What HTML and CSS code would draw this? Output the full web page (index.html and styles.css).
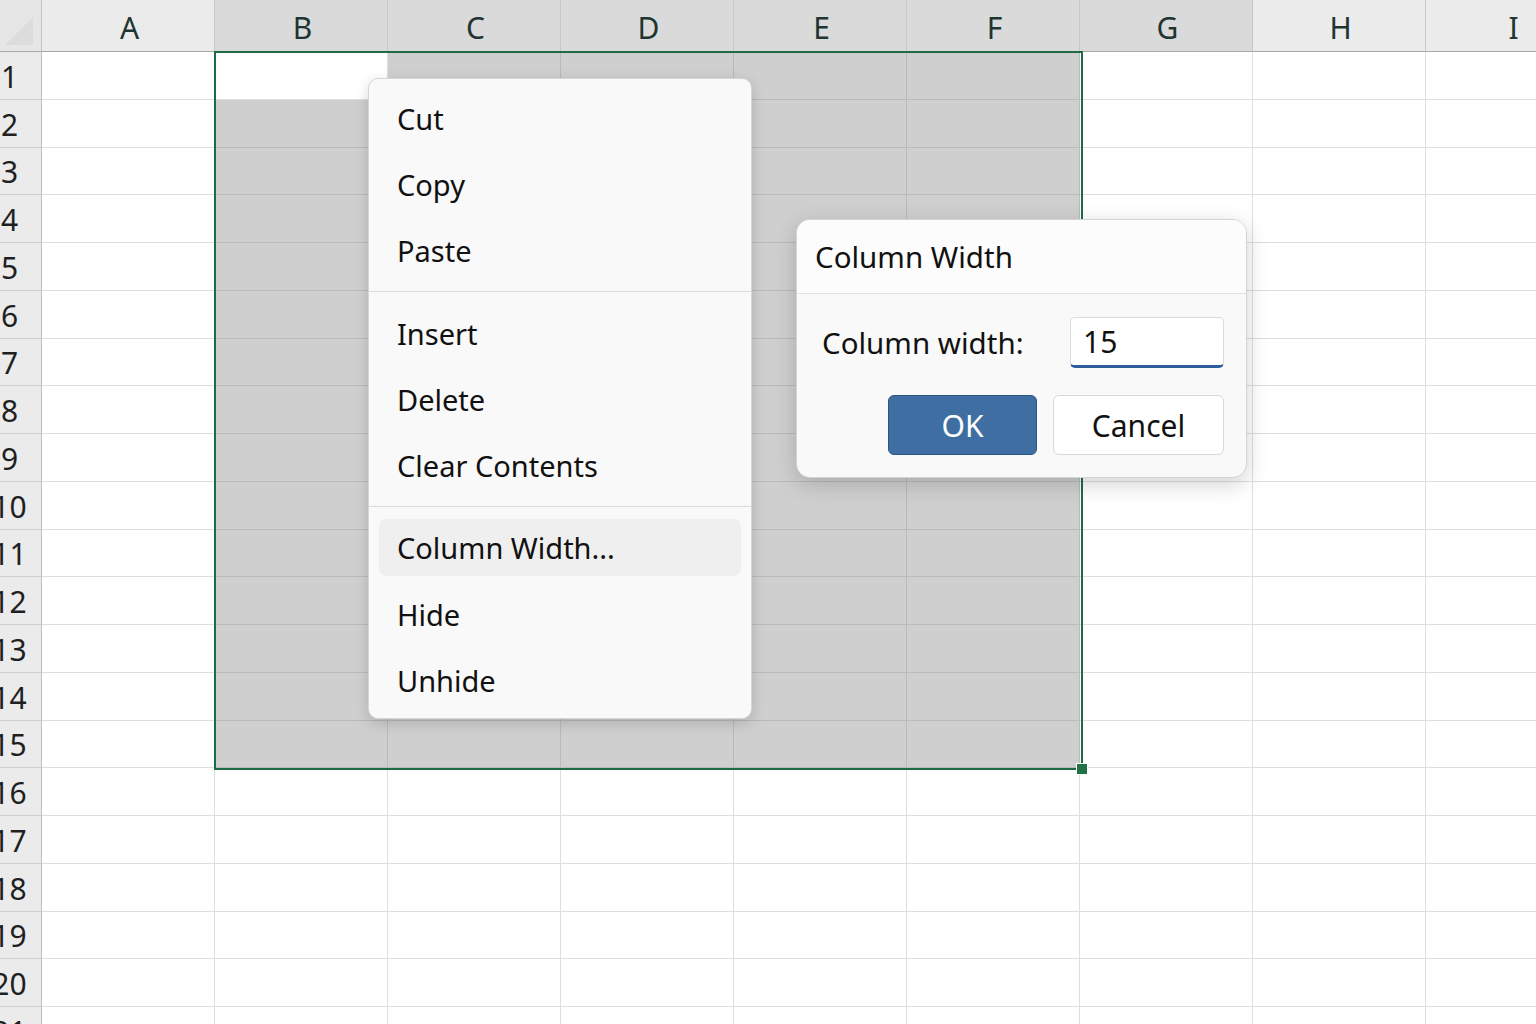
FILE: index.html
```html
<!DOCTYPE html>
<html lang="en">
<head>
  <meta charset="UTF-8">
  <meta name="viewport" content="width=device-width, initial-scale=1.0">
  <title>Column Width</title>
  <link rel="stylesheet" href="styles.css">
</head>
<body>
  <div class="sheet" id="sheet"></div>

  <div class="selection"><span class="handle"></span></div>

  <div class="menu">
    <div class="menu-item">Cut</div>
    <div class="menu-item">Copy</div>
    <div class="menu-item">Paste</div>
    <div class="menu-sep"></div>
    <div class="menu-item">Insert</div>
    <div class="menu-item">Delete</div>
    <div class="menu-item">Clear Contents</div>
    <div class="menu-sep"></div>
    <div class="menu-item active"><span>Column Width...</span></div>
    <div class="menu-item">Hide</div>
    <div class="menu-item">Unhide</div>
  </div>

  <div class="dialog">
    <div class="dialog-title">Column Width</div>
    <div class="dialog-body">
      <div class="field">
        <label for="colWidth">Column width:</label>
        <div class="input">15</div>
      </div>
      <div class="buttons">
        <button class="btn primary">OK</button>
        <button class="btn">Cancel</button>
      </div>
    </div>
  </div>

  <script>
    const columnas = ['A', 'B', 'C', 'D', 'E', 'F', 'G', 'H', 'I'];
    const seleccion = ['B', 'C', 'D', 'E', 'F'];
    const sheet = document.getElementById('sheet');

    let html = '<div class="corner"></div>';
    columnas.forEach(function (c) {
      const clase = (seleccion.includes(c) || c === 'G') ? 'col-head dark' : 'col-head';
      html += '<div class="' + clase + '">' + c + '</div>';
    });

    for (let fila = 1; fila <= 21; fila++) {
      html += '<div class="row-head">' + fila + '</div>';
      columnas.forEach(function (c) {
        let clase = 'cell';
        if (fila <= 15 && seleccion.includes(c) && !(fila === 1 && c === 'B')) {
          clase += ' sel';
        }
        html += '<div class="' + clase + '"></div>';
      });
    }
    sheet.innerHTML = html;
  </script>
</body>
</html>
```

FILE: styles.css
```css
body {
  font-family: "Noto Sans", "Open Sans", sans-serif;
  margin: 0;
  background-color: white;
  overflow: hidden;
  width: 1536px;
  height: 1024px;
  position: relative;
}
.sheet {
  display: grid;
  grid-template-columns: 60px repeat(9, 173px);
  grid-template-rows: 52px repeat(21, 47.75px);
  margin-left: -18px;
}
.corner {
  background-color: #e6e6e6;
  border-right: 1px solid #c4c4c4;
  border-bottom: 1px solid #a9a9a9;
  position: relative;
}
.corner::after {
  content: "";
  position: absolute;
  right: 8px;
  bottom: 6px;
  border-left: 28px solid transparent;
  border-bottom: 28px solid #dcdcdc;
}
.col-head {
  background-color: #ebebeb;
  border-right: 1px solid #c8c8c8;
  border-bottom: 1px solid #a9a9a9;
  color: #1e3530;
  font-size: 30px;
  display: flex;
  align-items: center;
  justify-content: center;
  padding-top: 4px;
  padding-left: 3px;
  box-sizing: border-box;
}
.col-head.dark {
  background-color: #dadada;
}
.row-head {
  background-color: #ebebeb;
  border-right: 1px solid #bdbdbd;
  border-bottom: 1px solid #cfcfcf;
  color: #1f1f1f;
  font-size: 30px;
  display: flex;
  align-items: center;
  justify-content: center;
  padding-top: 2px;
  padding-right: 4px;
  box-sizing: border-box;
}
.cell {
  border-right: 1px solid #dedede;
  border-bottom: 1px solid #dedede;
}
.cell.sel {
  background-color: #cfcfcf;
  border-right-color: #bababa;
  border-bottom-color: #bababa;
}
.selection {
  position: absolute;
  left: 214px;
  top: 51px;
  width: 869px;
  height: 719px;
  border: 2px solid #1e6b45;
  box-sizing: border-box;
}
.handle {
  position: absolute;
  right: -7px;
  bottom: -7px;
  width: 10px;
  height: 10px;
  background-color: #217346;
  border: 1px solid white;
}
.menu {
  position: absolute;
  left: 368px;
  top: 78px;
  width: 384px;
  height: 641px;
  box-sizing: border-box;
  display: flex;
  flex-direction: column;
  background-color: #f9f9f9;
  border: 1px solid #d6d6d6;
  border-radius: 10px;
  box-shadow: 0 4px 14px rgba(0, 0, 0, 0.16);
  padding: 6px 0 5px;
}
.menu-item {
  height: 66px;
  flex-shrink: 0;
  display: flex;
  align-items: center;
  padding-left: 28px;
  font-size: 29px;
  color: #111;
}
.menu-item.active {
  margin: 4px 10px 5px;
  height: 57px;
  padding-left: 18px;
  background-color: #efefef;
  border-radius: 7px;
}
.menu-sep {
  height: 1px;
  flex-shrink: 0;
  background-color: #dcdcdc;
  margin: 8px 0;
}
.dialog {
  position: absolute;
  left: 796px;
  top: 219px;
  width: 451px;
  height: 259px;
  box-sizing: border-box;
  background-color: #f9f9f9;
  border: 1px solid #d4d4d4;
  border-radius: 14px;
  box-shadow: 0 6px 22px rgba(0, 0, 0, 0.18);
  overflow: hidden;
}
.dialog-title {
  height: 73px;
  background-color: #fcfcfc;
  border-bottom: 1px solid #e2e2e2;
  display: flex;
  align-items: center;
  padding-left: 18px;
  font-size: 29.5px;
  color: #111;
}
.dialog-body {
  padding: 23px 22px 0 25px;
}
.field {
  display: flex;
  align-items: center;
  justify-content: space-between;
}
.field label {
  font-size: 29.5px;
  color: #111;
}
.input {
  width: 154px;
  height: 51px;
  box-sizing: border-box;
  background-color: white;
  border: 1px solid #dcdcdc;
  border-bottom: 3px solid #2d5d9c;
  border-radius: 5px;
  font-size: 30px;
  color: #111;
  padding: 0 12px;
  display: flex;
  align-items: center;
}
.buttons {
  display: flex;
  justify-content: flex-end;
  gap: 16px;
  margin-top: 27px;
}
.btn {
  font-family: inherit;
  height: 60px;
  width: 171px;
  font-size: 30px;
  border: 1px solid #d8d8d8;
  border-radius: 6px;
  background-color: white;
  color: #111;
  cursor: pointer;
}
.btn.primary {
  width: 149px;
  background-color: #3f6fa2;
  border-color: #2a5486;
  color: white;
}
```
